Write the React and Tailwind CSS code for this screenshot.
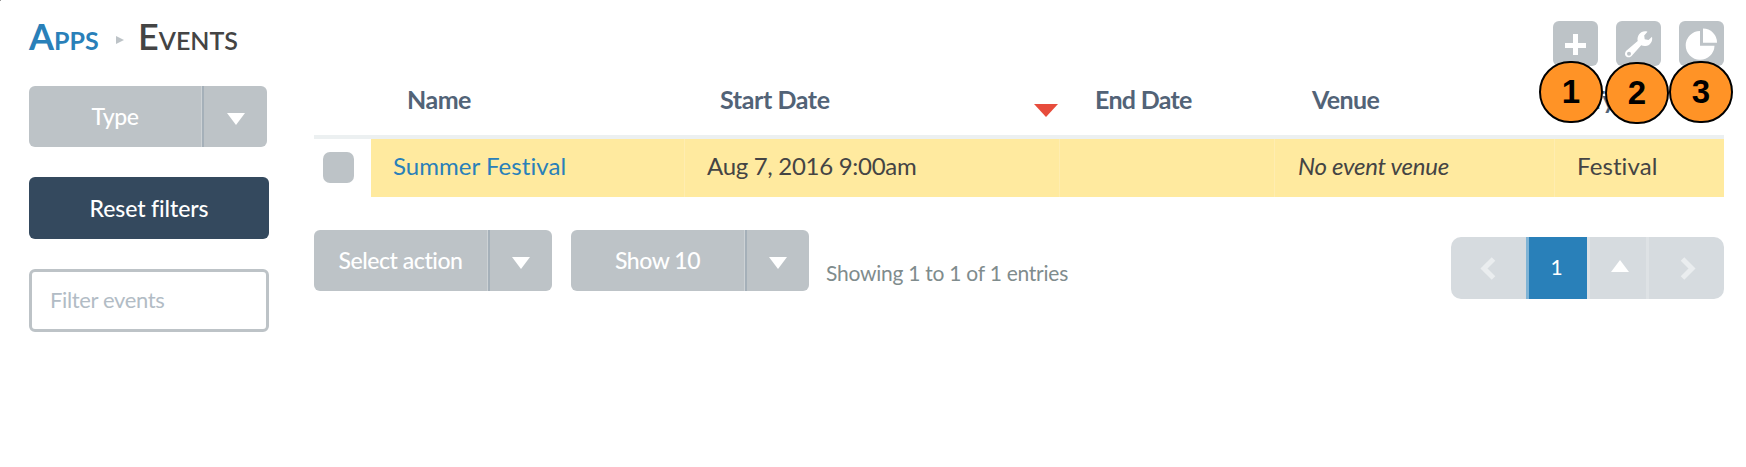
import React from "react";

function Caret({ className = "", size = "h-3 w-[18px]" }) {
  return (
    <svg className={`block shrink-0 ${size} ${className}`} viewBox="0 0 18 12" preserveAspectRatio="none" fill="currentColor">
      <path d="M0 0H18L9 12Z" />
    </svg>
  );
}

function SplitButton({ label, split }) {
  return (
    <button className="flex h-[61px] w-[238px] overflow-hidden rounded-md bg-[#bdc3c7] text-[23px] font-medium tracking-[-0.45px] text-white">
      <span className={`flex h-full ${split} items-center justify-center border-r border-[#cdd2d5] pb-px`}>{label}</span>
      <span className="flex h-full flex-1 items-center justify-center border-l-2 border-[#a5b0b9] pt-[5px]">
        <Caret />
      </span>
    </button>
  );
}

function IconButton({ children }) {
  return <button className="flex size-[45px] items-center justify-center rounded-md bg-[#bdc3c7] text-white">{children}</button>;
}

function Marker({ n, className }) {
  return (
    <div className={`absolute flex h-[62px] w-16 items-center justify-center rounded-full border-2 border-black bg-[#ff9326] font-['Liberation_Sans',sans-serif] text-[33px] font-bold text-black ${className}`}>
      {n}
    </div>
  );
}

const columns = "grid grid-cols-[57px_314px_375px_215px_280px_169px]";

export default function App() {
  return (
    <div className="relative flex h-[467px] w-[1746px] flex-col overflow-hidden bg-white pl-[29px] pr-[22px] pt-[21px] font-['Lato',sans-serif] text-[#444] [font-variant-ligatures:no-common-ligatures]">
      <div className="absolute left-0 top-0 size-px bg-[#999]" />
      <header className="flex h-[65px] items-start justify-between">
        <nav className="-mt-px flex items-center text-[36px] font-bold leading-[33px] [font-variant-caps:small-caps]">
          <a className="w-[87px] text-[#2980b9]">Apps</a>
          <svg className="mr-[14px] mt-[7px]" width="8" height="8" viewBox="0 0 8 8">
            <path d="M0 0L8 4L0 8Z" fill="#bdc3c7" />
          </svg>
          <span className="font-semibold">Events</span>
        </nav>
        <div className="flex gap-[18px]">
          <IconButton>
            <svg width="45" height="45" viewBox="0 0 45 45" fill="currentColor">
              <path d="M20 13h5v9h8v5h-8v7h-5v-7h-8v-5h8Z" />
            </svg>
          </IconButton>
          <IconButton>
            <svg width="45" height="45" viewBox="0 0 45 45" fill="currentColor">
              <path fillRule="evenodd" d="M31.5 10.7L28.2 14.5L28.7 18.2L32.5 19.1L36 15.7C37 20.5 34 24.8 29.5 25C27.8 25.1 26.3 24.8 25.2 24.3L16.5 34C13.2 39 6.5 35.3 10 30.1L21.7 20C20.5 14.5 25.5 8.7 31.5 10.7ZM13 30.8A2 2 0 1 0 13 34.8A2 2 0 1 0 13 30.8Z" />
            </svg>
          </IconButton>
          <IconButton>
            <svg width="45" height="45" viewBox="0 0 45 45" fill="currentColor">
              <path d="M21 10V24.8H35.5A14.4 14.4 0 1 1 21 10Z" />
              <path d="M24 7.5A14 14 0 0 1 38 21.8H24Z" />
            </svg>
          </IconButton>
        </div>
      </header>

      <div className="flex">
        <aside className="flex w-60 flex-col">
          <SplitButton label="Type" split="w-[173px]" />
          <button className="mt-[30px] flex h-[62px] items-center justify-center rounded-md bg-[#34495e] pt-px text-[23px] font-medium tracking-[-0.1px] text-white [font-variant-ligatures:normal]">Reset filters</button>
          <div className="mt-[30px] flex h-[63px] items-center rounded-md border-[3px] border-[#bdc3c7] px-[18px] pb-0.5 text-[22px] tracking-[-0.35px] text-[#b2bcc5]">Filter events</div>
        </aside>

        <main className="ml-[45px] w-[1410px]">
          <div className={`${columns} h-[53px] border-b-4 border-[#ecf0f1] text-[25px] font-bold leading-[27px] text-[#526377]`}>
            <span />
            <span className="pl-9 tracking-[-0.5px]">Name</span>
            <span className="flex pl-[35px] tracking-[-0.4px]">
              Start Date
              <Caret className="ml-auto mr-[2px] mt-[18px] text-[#e74c3c]" size="h-[13px] w-6" />
            </span>
            <span className="pl-[35px] tracking-[-0.7px]">End Date</span>
            <span className="pl-[37px] tracking-[-0.6px]">Venue</span>
            <span className="pl-[35px] tracking-[-0.5px]">Type</span>
          </div>
          <div className={`${columns} h-[58px] text-[24px] leading-[54px]`}>
            <span className="pl-[9px] pt-[13px]">
              <span className="block size-[31px] rounded-[7px] bg-[#bdc3c7]" />
            </span>
            <span className="border-r border-[#ffedb0] bg-[#ffea9f] pl-[22px] tracking-[0.05px] text-[#2980b9]">Summer Festival</span>
            <span className="border-r border-[#ffedb0] bg-[#ffea9f] pl-[22px] tracking-[-0.3px]">Aug 7, 2016 9:00am</span>
            <span className="border-r border-[#ffedb0] bg-[#ffea9f]" />
            <span className="border-r border-[#ffedb0] bg-[#ffea9f] pl-[23px] italic tracking-[-0.25px]">No event venue</span>
            <span className="bg-[#ffea9f] pl-[22px] tracking-[0.1px]">Festival</span>
          </div>

          <div className="flex pt-[33px]">
            <SplitButton label="Select action" split="w-[174px]" />
            <div className="w-[19px]" />
            <SplitButton label="Show 10" split="w-[174px]" />
            <span className="ml-[17px] mt-[29px] whitespace-nowrap text-[21px] leading-7 tracking-[-0.25px] text-[#7f8c8d]">Showing 1 to 1 of 1 entries</span>
            <div className="ml-auto mt-[7px] flex h-[62px] w-[273px] overflow-hidden rounded-[10px] bg-[#d6dbdf] text-white">
              <span className="flex w-[75px] items-center justify-center pr-0.5">
                <svg width="16" height="24" viewBox="0 0 16 24" fill="none" stroke="#eaedef" strokeWidth="5">
                  <path d="M13.5 3L4 12.5L13.5 22" />
                </svg>
              </span>
              <span className="flex w-[61px] items-center justify-center border-l-[3px] border-[#7fb3d5] bg-[#2980b9] pb-0.5 pr-[3px] text-[21px]">1</span>
              <span className="flex w-[62px] items-center justify-center border-x-[3px] border-[#dee2e5] pb-[5px] pl-1">
                <Caret className="rotate-180" />
              </span>
              <span className="flex flex-1 items-center justify-center pl-0.5">
                <svg width="16" height="24" viewBox="0 0 16 24" fill="none" stroke="#eaedef" strokeWidth="5">
                  <path d="M2.5 3L12 12.5L2.5 22" />
                </svg>
              </span>
            </div>
          </div>
        </main>
      </div>

      <Marker n="1" className="left-[1539px] top-[61px]" />
      <Marker n="2" className="left-[1605px] top-[62px]" />
      <Marker n="3" className="left-[1669px] top-[61px]" />
    </div>
  );
}
